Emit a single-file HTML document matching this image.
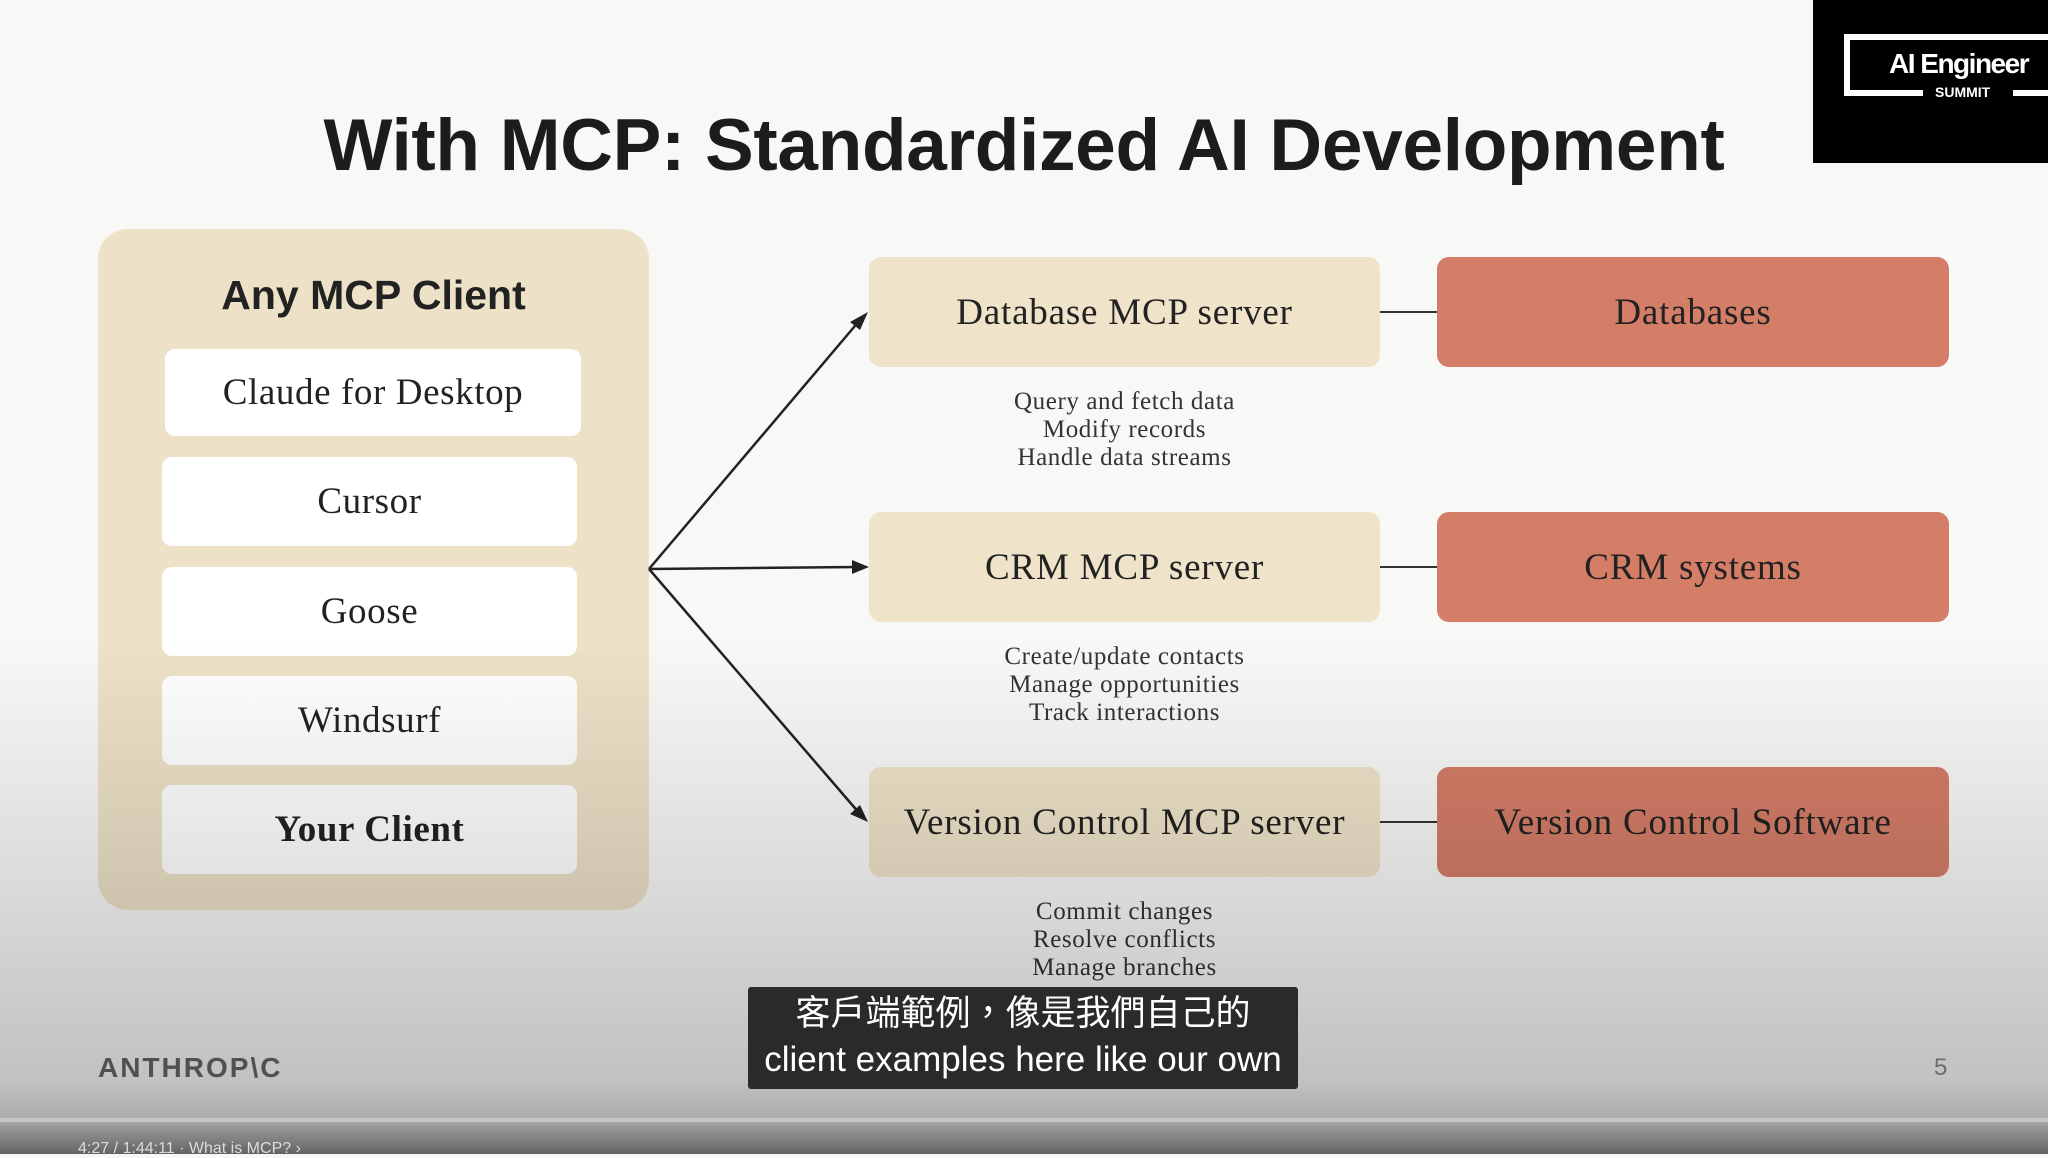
<!DOCTYPE html>
<html><head><meta charset="utf-8"><style>
*{margin:0;padding:0;box-sizing:border-box}
body{width:2048px;height:1154px;overflow:hidden;background:#f8f8f6;position:relative;font-family:"Liberation Sans",sans-serif}
.a{position:absolute}
.title{left:0;width:2048px;text-align:center;top:104px;font-size:73px;font-weight:bold;color:#1c1c1c;letter-spacing:-0.3px}
.logo{left:1813px;top:0;width:235px;height:163px;background:#000}
.panel{left:98px;top:229px;width:551px;height:681px;background:#ede1c7;border-radius:30px}
.ph{left:98px;width:551px;top:272px;text-align:center;font-size:41px;font-weight:bold;color:#222}
.wb{background:#fff;border-radius:10px;text-align:center;font-family:"Liberation Serif",serif;font-size:37px;letter-spacing:0.6px;color:#222;display:flex;align-items:center;justify-content:center}
.sv{left:869px;width:511px;height:110px;background:#efe3c9;border-radius:12px;font-family:"Liberation Serif",serif;font-size:37px;letter-spacing:0.8px;color:#222;display:flex;align-items:center;justify-content:center}
.rd{left:1437px;width:512px;height:110px;background:#d47d67;border-radius:12px;font-family:"Liberation Serif",serif;font-size:37px;letter-spacing:0.8px;color:#222;display:flex;align-items:center;justify-content:center}
.ln{left:1380px;width:57px;height:2px;background:#333}
.ds{left:869px;width:511px;text-align:center;font-family:"Liberation Serif",serif;font-size:25px;letter-spacing:0.6px;line-height:28px;color:#333}
.shade{left:0;top:0;width:2048px;height:1154px;background:linear-gradient(to bottom,rgba(0,0,0,0) 0px,rgba(0,0,0,0) 640px,rgba(0,0,0,0.1) 850px,rgba(0,0,0,0.22) 1080px,rgba(0,0,0,0.3) 1118px,rgba(0,0,0,0.45) 1135px,rgba(0,0,0,0.6) 1154px)}
</style></head><body>
<div class="a title">With MCP: Standardized AI Development</div>
<div class="a logo">
 <div class="a" style="left:31px;top:34px;width:220px;height:62px;border:6px solid #fff;border-right:none"></div>
 <div class="a" style="left:110px;top:84px;width:90px;height:20px;background:#000"></div>
 <div class="a" style="left:76px;top:48px;font-size:28px;font-weight:bold;color:#fff;letter-spacing:-1.5px">AI Engineer</div>
 <div class="a" style="left:122px;top:84px;font-size:14px;font-weight:bold;color:#fff">SUMMIT</div>
</div>
<div class="a panel"></div>
<div class="a ph">Any MCP Client</div>
<div class="a wb" style="left:165px;top:349px;width:416px;height:87px">Claude for Desktop</div>
<div class="a wb" style="left:162px;top:457px;width:415px;height:89px">Cursor</div>
<div class="a wb" style="left:162px;top:567px;width:415px;height:89px">Goose</div>
<div class="a wb" style="left:162px;top:676px;width:415px;height:89px">Windsurf</div>
<div class="a wb" style="left:162px;top:785px;width:415px;height:89px;font-weight:bold">Your Client</div>
<svg class="a" style="left:0;top:0" width="2048" height="1154">
<g stroke="#222" stroke-width="2.5" fill="#222">
<line x1="649" y1="569" x2="860" y2="320"/>
<line x1="649" y1="569" x2="858" y2="567"/>
<line x1="649" y1="569" x2="860" y2="814"/>
<polygon points="868,312 850,322 860,330" stroke="none"/>
<polygon points="869,567 852,560 852,574" stroke="none"/>
<polygon points="868,822 860,805 850,814" stroke="none"/>
</g></svg>
<div class="a sv" style="top:257px">Database MCP server</div>
<div class="a sv" style="top:512px">CRM MCP server</div>
<div class="a sv" style="top:767px">Version Control MCP server</div>
<div class="a rd" style="top:257px">Databases</div>
<div class="a rd" style="top:512px">CRM systems</div>
<div class="a rd" style="top:767px">Version Control Software</div>
<div class="a ln" style="top:311px"></div>
<div class="a ln" style="top:566px"></div>
<div class="a ln" style="top:821px"></div>
<div class="a ds" style="top:388px">Query and fetch data<br>Modify records<br>Handle data streams</div>
<div class="a ds" style="top:643px">Create/update contacts<br>Manage opportunities<br>Track interactions</div>
<div class="a ds" style="top:898px">Commit changes<br>Resolve conflicts<br>Manage branches</div>
<div class="a" style="left:98px;top:1052px;font-size:28px;font-weight:bold;color:#666;letter-spacing:2px">ANTHROP\C</div>
<div class="a" style="left:1934px;top:1054px;font-size:24px;color:#888">5</div>
<div class="a shade"></div>
<div class="a" style="left:748px;top:987px;width:550px;height:102px;background:#2a2a2a;border-radius:3px;color:#fff;text-align:center;font-family:'Liberation Sans','Noto Sans CJK TC',sans-serif;font-size:35px;line-height:46px;padding-top:4px">客戶端範例，像是我們自己的<br>client examples here like our own</div>
<div class="a" style="left:0;top:1118px;width:2048px;height:4px;background:rgba(255,255,255,0.35)"></div>
<div class="a" style="left:78px;top:1140px;font-size:16px;color:#ddd">4:27 / 1:44:11 · What is MCP? ›</div>
</body></html>
